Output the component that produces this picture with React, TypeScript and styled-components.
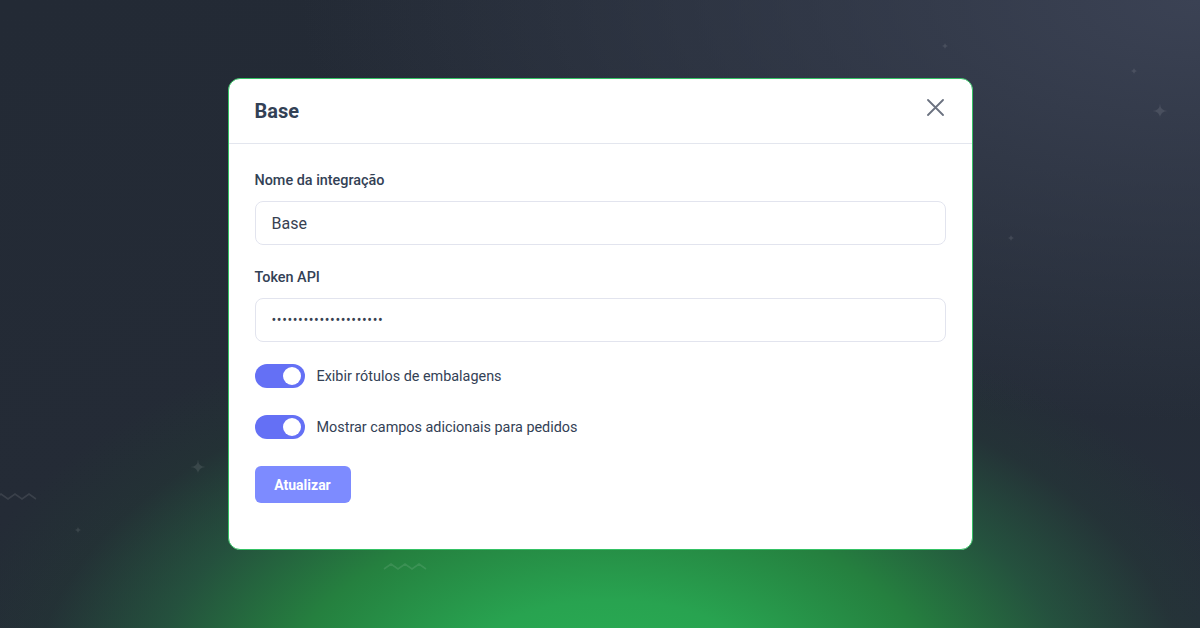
import React, { useState } from 'react'
import styled, { createGlobalStyle } from 'styled-components'

const GlobalStyle = createGlobalStyle`
  html, body, #root {
    margin: 0;
    height: 100%;
  }
  body {
    font-family: Roboto, 'Liberation Sans', Arial, sans-serif;
    -webkit-font-smoothing: antialiased;
  }
  * {
    box-sizing: border-box;
  }
`

const Page = styled.main`
  position: relative;
  width: 100%;
  height: 100%;
  overflow: hidden;
  display: flex;
  align-items: center;
  justify-content: center;
  background:
    radial-gradient(ellipse 680px 400px at 610px 700px, #29b255 0%, #28a350 25%, #25803f 48%, rgba(36, 96, 64, 0.7) 68%, rgba(34, 64, 52, 0.3) 85%, rgba(34, 50, 50, 0) 100%),
    radial-gradient(ellipse 900px 420px at 1200px 0px, #3b4254, rgba(59, 66, 84, 0) 100%),
    linear-gradient(160deg, #232a35 0%, #242b36 50%, #262e3a 100%);
`

const Decor = styled.svg`
  position: absolute;
  inset: 0;
  width: 100%;
  height: 100%;
  pointer-events: none;
`

const Modal = styled.section`
  position: relative;
  width: 745px;
  background: #ffffff;
  border: 1.5px solid #34c164;
  border-radius: 12px;
  overflow: hidden;
`

const Header = styled.header`
  height: 65px;
  padding: 0 26px;
  display: flex;
  align-items: center;
  justify-content: space-between;
  border-bottom: 1px solid #e3e6ee;
`

const Title = styled.h2`
  margin: 0;
  font-size: 20px;
  font-weight: 700;
  color: #334155;
`

const CloseButton = styled.button`
  width: 24px;
  height: 24px;
  padding: 0;
  margin: 0 -2px 7px 0;
  border: none;
  background: none;
  display: flex;
  align-items: center;
  justify-content: center;
  cursor: pointer;
  color: #6b7280;
`

const Body = styled.div`
  padding: 27px 26px 46px;
  display: flex;
  flex-direction: column;
`

const Field = styled.div`
  display: flex;
  flex-direction: column;
  margin-bottom: 23px;
`

const Label = styled.label`
  font-size: 14.4px;
  line-height: 20px;
  font-weight: 500;
  color: #334155;
  margin-bottom: 10px;
`

const Input = styled.input`
  height: 44px;
  padding: 0 16px;
  border: 1px solid #e2e4ee;
  border-radius: 8px;
  font-family: inherit;
  font-size: 16px;
  color: #374151;
  outline: none;
  background: #fff;

  &[type='password'] {
    font-size: 14px;
    letter-spacing: 0.6px;
  }
`

const ToggleList = styled.div`
  display: flex;
  flex-direction: column;
  gap: 27px;
  margin-top: -1px;
  margin-bottom: 27px;
`

const ToggleRow = styled.label`
  display: flex;
  align-items: center;
  gap: 12px;
  cursor: pointer;
`

const Track = styled.span<{ $on: boolean }>`
  position: relative;
  width: 50px;
  height: 24px;
  border-radius: 12px;
  background: ${(p) => (p.$on ? '#6470f5' : '#cbd5e1')};
  flex-shrink: 0;
`

const Knob = styled.span<{ $on: boolean }>`
  position: absolute;
  top: 3px;
  left: ${(p) => (p.$on ? '28px' : '3px')};
  width: 18px;
  height: 18px;
  border-radius: 50%;
  background: #ffffff;
`

const ToggleText = styled.span`
  font-size: 14.4px;
  color: #334155;
`

const SubmitButton = styled.button`
  align-self: flex-start;
  width: 96px;
  height: 37px;
  border: none;
  border-radius: 6px;
  background: #7d8bff;
  color: #ffffff;
  font-family: inherit;
  font-size: 14px;
  font-weight: 700;
  cursor: pointer;
`

const Sparkle = ({ x, y, r }: { x: number; y: number; r: number }) => (
  <path
    d={`M${x} ${y - r} Q${x} ${y} ${x + r} ${y} Q${x} ${y} ${x} ${y + r} Q${x} ${y} ${x - r} ${y} Q${x} ${y} ${x} ${y - r}Z`}
    fill="rgba(255,255,255,0.1)"
  />
)

const Zigzag = ({ x, y }: { x: number; y: number }) => (
  <polyline
    points={`${x},${y} ${x + 7},${y - 5} ${x + 14},${y} ${x + 21},${y - 5} ${x + 28},${y} ${x + 35},${y - 5} ${x + 42},${y}`}
    fill="none"
    stroke="rgba(255,255,255,0.1)"
    strokeWidth="1.6"
  />
)

const TOGGLES = [
  { id: 'labels', text: 'Exibir rótulos de embalagens' },
  { id: 'fields', text: 'Mostrar campos adicionais para pedidos' },
]

const App = () => {
  const [state, setState] = useState<Record<string, boolean>>({
    labels: true,
    fields: true,
  })

  return (
    <>
      <GlobalStyle />
      <Page>
        <Decor viewBox="0 0 1200 628" preserveAspectRatio="none">
          <Sparkle x={945} y={46} r={4} />
          <Sparkle x={1134} y={71} r={4} />
          <Sparkle x={1160} y={111} r={8} />
          <Sparkle x={1011} y={238} r={4} />
          <Sparkle x={198} y={467} r={8} />
          <Sparkle x={78} y={530} r={4} />
          <Zigzag x={-6} y={499} />
          <Zigzag x={384} y={569} />
        </Decor>
        <Modal>
          <Header>
            <Title>Base</Title>
            <CloseButton aria-label="Fechar">
              <svg width="17" height="17" viewBox="0 0 17 17">
                <path
                  d="M1 1L16 16M16 1L1 16"
                  stroke="currentColor"
                  strokeWidth="1.8"
                  strokeLinecap="round"
                />
              </svg>
            </CloseButton>
          </Header>
          <Body>
            <Field>
              <Label htmlFor="name">Nome da integração</Label>
              <Input id="name" defaultValue="Base" />
            </Field>
            <Field>
              <Label htmlFor="token">Token API</Label>
              <Input id="token" type="password" defaultValue="abcdefghijklmnopqrstu" />
            </Field>
            <ToggleList>
              {TOGGLES.map((t) => (
                <ToggleRow
                  key={t.id}
                  onClick={() => setState((s) => ({ ...s, [t.id]: !s[t.id] }))}
                >
                  <Track $on={state[t.id]}>
                    <Knob $on={state[t.id]} />
                  </Track>
                  <ToggleText>{t.text}</ToggleText>
                </ToggleRow>
              ))}
            </ToggleList>
            <SubmitButton>Atualizar</SubmitButton>
          </Body>
        </Modal>
      </Page>
    </>
  )
}

export default App
